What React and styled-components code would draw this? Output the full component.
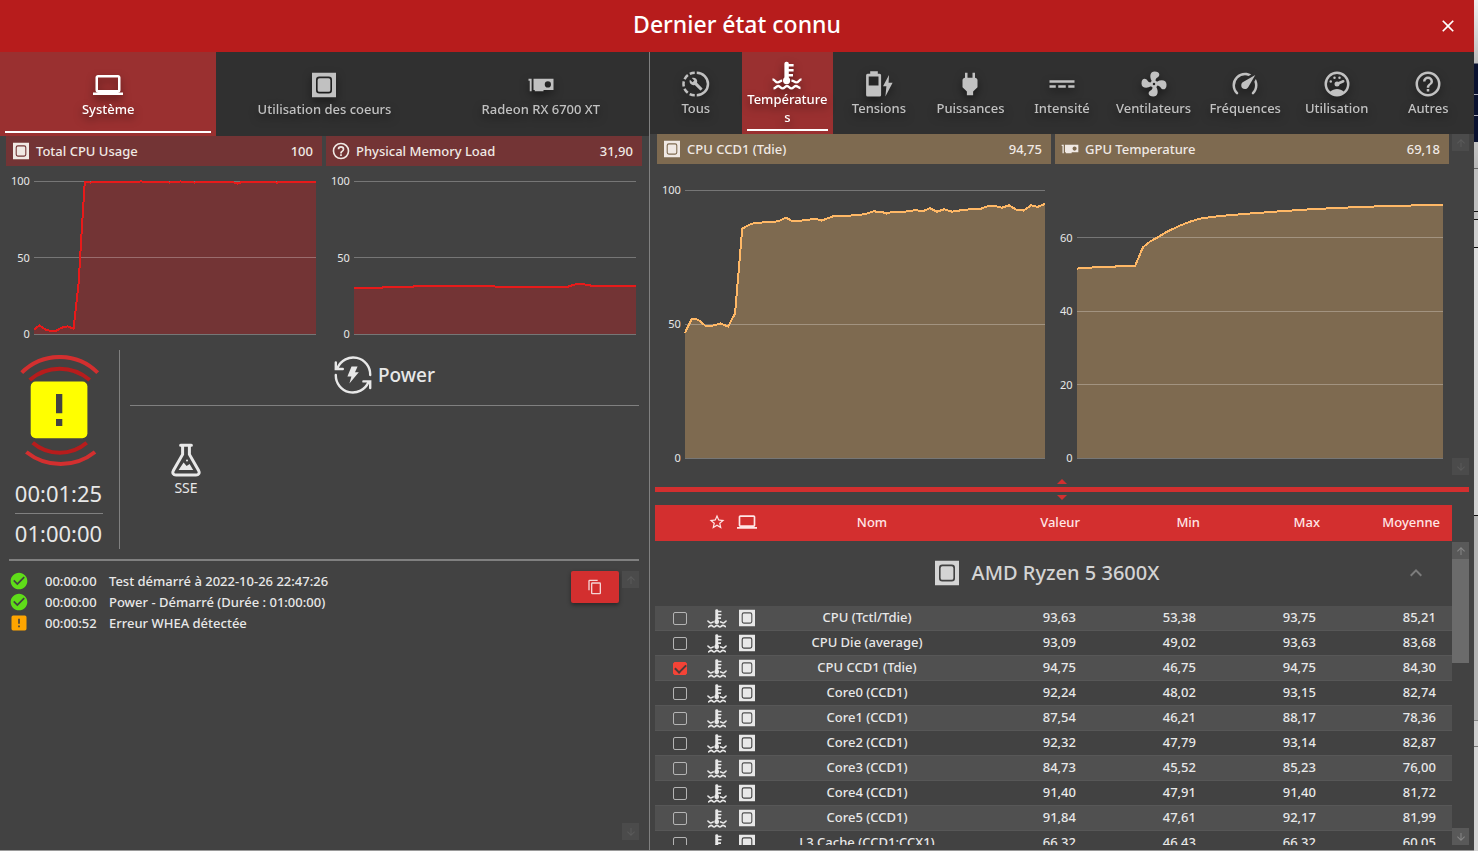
import React, { useState } from "react";
import styled, { createGlobalStyle, css } from "styled-components";

const GlobalStyle = createGlobalStyle`
    * {
        box-sizing: border-box;
    }
    body {
        margin: 0;
        background: #424242;
        color: #e8e8e8;
        font-family: "Noto Sans", "Open Sans", sans-serif;
        font-size: 13px;
        font-weight: 500;
        line-height: 18px;
    }
    button {
        font: inherit;
        color: inherit;
        border: 0;
        padding: 0;
        background: none;
        cursor: pointer;
    }
`;

/* ---------- icons ---------- */

const PATHS = {
    close: "M19,6.41L17.59,5L12,10.59L6.41,5L5,6.41L10.59,12L5,17.59L6.41,19L12,13.41L17.59,19L19,17.59L13.41,12L19,6.41Z",
    laptop: "M4,6H20V16H4M20,18A2,2 0 0,0 22,16V6C22,4.89 21.1,4 20,4H4C2.89,4 2,4.89 2,6V16A2,2 0 0,0 4,18H0V20H24V18H20Z",
    gpu: "M2,7V8.5H3V17H4.5V7M6,7V16H7V17H14V16H22V7M17.5,9A2.5,2.5 0 0,1 20,11.5A2.5,2.5 0 0,1 17.5,14A2.5,2.5 0 0,1 15,11.5A2.5,2.5 0 0,1 17.5,9Z",
    plug: "M16,7V3H14V7H10V3H8V7H8C7,7 6,8 6,9V14.5L9.5,18V21H14.5V18L18,14.5V9C18,8 17,7 16,7Z",
    current: "M2,9V11H22V9H2M2,13V15H7V13H2M9,13V15H15V13H9M17,13V15H22V13H17Z",
    fan: "M12,11A1,1 0 0,0 11,12A1,1 0 0,0 12,13A1,1 0 0,0 13,12A1,1 0 0,0 12,11M12.5,2C17,2 17.11,5.57 14.75,6.75C13.76,7.24 13.32,8.29 13.13,9.22C13.61,9.42 14.03,9.73 14.35,10.13C18.05,8.13 22.03,8.92 22.03,12.5C22.03,17 18.46,17.1 17.28,14.73C16.78,13.74 15.72,13.3 14.79,13.11C14.59,13.59 14.28,14 13.88,14.34C15.87,18.03 15.08,22 11.5,22C7,22 6.91,18.42 9.27,17.24C10.25,16.75 10.69,15.71 10.89,14.79C10.4,14.59 9.97,14.27 9.65,13.87C5.96,15.85 2,15.07 2,11.5C2,7 5.56,6.89 6.74,9.26C7.24,10.25 8.29,10.68 9.22,10.87C9.41,10.39 9.73,9.97 10.14,9.65C8.15,5.96 8.94,2 12.5,2Z",
    speed: "M12,16A3,3 0 0,1 9,13C9,11.88 9.61,10.9 10.5,10.39L20.21,4.77L14.68,14.35C14.18,15.33 13.17,16 12,16M12,3C13.81,3 15.5,3.5 16.97,4.32L14.87,5.53C14,5.19 13,5 12,5A8,8 0 0,0 4,13C4,15.21 4.89,17.21 6.34,18.65H6.35C6.74,19.04 6.74,19.67 6.35,20.06C5.96,20.45 5.32,20.45 4.93,20.07V20.07C3.12,18.26 2,15.76 2,13A10,10 0 0,1 12,3M22,13C22,15.76 20.88,18.26 19.07,20.07V20.07C18.68,20.45 18.05,20.45 17.66,20.06C17.27,19.67 17.27,19.04 17.66,18.65V18.65C19.11,17.2 20,15.21 20,13C20,12 19.81,11 19.46,10.1L20.67,8C21.5,9.5 22,11.18 22,13Z",
    help: "M11,18H13V16H11V18M12,2A10,10 0 0,0 2,12A10,10 0 0,0 12,22A10,10 0 0,0 22,12A10,10 0 0,0 12,2M12,20C7.59,20 4,16.41 4,12C4,7.59 7.59,4 12,4C16.41,4 20,7.59 20,12C20,16.41 16.41,20 12,20M12,6A4,4 0 0,0 8,10H10A2,2 0 0,1 12,8A2,2 0 0,1 14,10C14,12 11,11.75 11,15H13C13,12.75 16,12.5 16,10A4,4 0 0,0 12,6Z",
    star: "M12,15.39L8.24,17.66L9.23,13.38L5.91,10.5L10.29,10.13L12,6.09L13.71,10.13L18.09,10.5L14.77,13.38L15.76,17.66M22,9.24L14.81,8.63L12,2L9.19,8.63L2,9.24L7.45,13.97L5.82,21L12,17.27L18.18,21L16.54,13.97L22,9.24Z",
    copy: "M19,21H8V7H19M19,5H8A2,2 0 0,0 6,7V21A2,2 0 0,0 8,23H19A2,2 0 0,0 21,21V7A2,2 0 0,0 19,5M16,1H4A2,2 0 0,0 2,3V17H4V3H16V1Z",
    ok: "M12 2C6.5 2 2 6.5 2 12S6.5 22 12 22 22 17.5 22 12 17.5 2 12 2M10 17L5 12L6.41 10.59L10 14.17L17.59 6.58L19 8L10 17Z",
    alert: "M5,3H19A2,2 0 0,1 21,5V19A2,2 0 0,1 19,21H5A2,2 0 0,1 3,19V5A2,2 0 0,1 5,3M13,13V7H11V13H13M13,17V15H11V17H13Z",
    up: "M13,20H11V8L5.5,13.5L4.08,12.08L12,4.16L19.92,12.08L18.5,13.5L13,8V20Z",
    down: "M11,4H13V16L18.5,10.5L19.92,11.92L12,19.84L4.08,11.92L5.5,10.5L11,16V4Z",
    chevron: "M7.41,15.41L12,10.83L16.59,15.41L18,14L12,8L6,14L7.41,15.41Z",
};

// Icons that need more than a single filled path
const DRAWN = {
    cpu: (
        <path
            fillRule="evenodd"
            d="M2.4 2.2H21.6V21.8H2.4ZM8.2 5.2A2.6 2.6 0 0 0 5.6 7.8V16.2A2.6 2.6 0 0 0 8.2 18.8H15.8A2.6 2.6 0 0 0 18.4 16.2V7.8A2.6 2.6 0 0 0 15.8 5.2ZM8.4 6.6H15.6A1.5 1.5 0 0 1 17.1 8.1V15.9A1.5 1.5 0 0 1 15.6 17.4H8.4A1.5 1.5 0 0 1 6.9 15.9V8.1A1.5 1.5 0 0 1 8.4 6.6Z"
        />
    ),
    all: (
        <>
            <path d="M12.6 3A9 9 0 0 1 12.6 21" fill="none" stroke="currentColor" strokeWidth="2" />
            <path d="M11 21A9 9 0 0 1 11 3" fill="none" stroke="currentColor" strokeWidth="2" strokeDasharray="4.2 1.8" />
            <path
                transform="translate(6.4 6.4) scale(.47)"
                d="M22.7,19L13.6,9.9C14.5,7.6 14,4.9 12.1,3C10.1,1 7.1,0.6 4.7,1.7L9,6L6,9L1.6,4.7C0.4,7.1 0.9,10.1 2.9,12.1C4.8,14 7.5,14.5 9.8,13.6L18.9,22.7C19.3,23.1 19.9,23.1 20.3,22.7L22.6,20.4C23.1,20 23.1,19.3 22.7,19Z"
            />
        </>
    ),
    temp: (
        <g transform="scale(.8)">
            <rect x="12.4" y="1.8" width="4.4" height="18" rx="2" />
            <circle cx="14.6" cy="20.6" r="3.6" />
            <path
                d="M16 5.2H21.6M16 10.2H21.6M16 15.2H21M.5 19.4C3 19.4 3.2 22.4 5.6 22.4C7.8 22.4 7.8 20.8 10.2 20.6M29.5 19.4C27 19.4 26.8 22.4 24.4 22.4C22.2 22.4 22.2 20.8 19.4 20.6M1.5 28.4C4 28.4 4 26 6.2 26S8.4 28.4 10.6 28.4S12.8 26 15 26S17.2 28.4 19.4 28.4S21.6 26 23.8 26S26 28 28.5 28"
                fill="none"
                stroke="currentColor"
                strokeWidth="2.4"
            />
        </g>
    ),
    volt: (
        <g transform="scale(.8)">
            <path
                fillRule="evenodd"
                d="M6.2 2.3H13.8V4.8H15.6A1.5 1.5 0 0 1 17.1 6.3V25.9A1.5 1.5 0 0 1 15.6 27.4H3.6A1.5 1.5 0 0 1 2.1 25.9V6.3A1.5 1.5 0 0 1 3.6 4.8H6.2ZM4.7 7.6V16.4H14.5V7.6Z"
            />
            <path d="M25 6L19 17.2H22.4L21.4 27.4L28.6 13.8H24.6Z" />
        </g>
    ),
    gauge: (
        <>
            <path
                fillRule="evenodd"
                d="M12,2A10,10 0 0,0 2,12A10,10 0 0,0 12,22A10,10 0 0,0 22,12A10,10 0 0,0 12,2M12,4A8,8 0 0,1 20,12C20,14.4 19,16.5 17.3,18C15.9,16.7 14,16 12,16C10,16 8.2,16.7 6.7,18C5,16.5 4,14.4 4,12A8,8 0 0,1 12,4Z"
            />
            <circle cx="10" cy="7" r="1" />
            <circle cx="14" cy="7" r="1" />
            <circle cx="7" cy="10" r="1" />
            <circle cx="12" cy="12" r="2" />
            <path d="M12 12L17 9.8" stroke="currentColor" strokeWidth="2" strokeLinecap="round" />
        </>
    ),
};

const Svg = styled.svg`
    display: block;
    flex: none;
    fill: currentColor;
`;

const Icon = ({ name, size = 20, ...rest }) => (
    <Svg viewBox="0 0 24 24" width={size} height={size} aria-hidden="true" {...rest}>
        {DRAWN[name] || <path d={PATHS[name]} />}
    </Svg>
);

/* ---------- window ---------- */

const Screen = styled.div`
    display: flex;
    height: 100vh;
    overflow: hidden;
`;

const Window = styled.div`
    flex: 1;
    min-width: 0;
    display: flex;
    flex-direction: column;
    border-bottom: 1px solid #9a9a9a;
`;

// sliver of the desktop behind the window
const Desktop = styled.div`
    flex: 0 0 4px;
    background: linear-gradient(
        #f0f0f0 0, #bdbdbd 63px, #0a1230 64px, #0a1230 94px, #aab 94px, #aab 95px,
        #0a1230 95px, #0a1230 115px, #aab 115px, #aab 116px, #0a1230 116px, #0a1230 142px,
        #c4c4c4 142px, #b8b8b8 168px, #666 168px, #666 169px, #c0c0c0 169px, #c0c0c0 211px,
        #111 211px, #111 212px, #c0c0c0 212px, #c0c0c0 219px, #111 219px, #111 220px,
        #d0d0d0 220px, #d0d0d0 247px, #111 247px, #111 248px, #dedede 248px, #d2d2d2 515px,
        #111 515px, #111 516px, #b4b4b4 516px, #b4b4b4 720px, #888 720px, #888 721px,
        #d0d0d0 721px, #d0d0d0 746px, #777 746px, #777 747px, #d6d6d6 747px
    );
`;

const TitleBar = styled.header`
    display: grid;
    grid-template-columns: 1fr auto 1fr;
    align-items: center;
    height: 52px;
    flex: none;
    padding: 0 16px;
    background: #b71c1c;
    color: #fff;
`;

const Title = styled.h1`
    grid-column: 2;
    margin: 0;
    padding-bottom: 4px;
    font-size: 23px;
    font-weight: 500;
    line-height: 32px;
`;

const CloseButton = styled.button`
    justify-self: end;
`;

const Columns = styled.main`
    flex: 1;
    min-height: 0;
    display: grid;
    grid-template-columns: 650fr 824fr;
`;

const Panel = styled.section`
    display: flex;
    flex-direction: column;
    min-width: 0;
    min-height: 0;
    border-right: ${(p) => (p.$divided ? "1px solid #808080" : "0")};
`;

/* ---------- tabs ---------- */

const TabBar = styled.nav`
    display: flex;
    flex: none;
    height: ${(p) => p.$height}px;
    background: #303030;
`;

const TabButton = styled.button`
    position: relative;
    flex: 1 1 0;
    min-width: 0;
    padding: 0 5px;
    display: flex;
    flex-direction: column;
    align-items: center;
    justify-content: center;
    color: #c1c1c1;
    overflow-wrap: anywhere;

    svg,
    span {
        filter: drop-shadow(0 4px 4px rgba(0, 0, 0, 0.5));
    }

    ${(p) =>
        p.$active &&
        css`
            background: #9a3030;
            color: #fff;

            &::after {
                content: "";
                position: absolute;
                left: 5px;
                right: 5px;
                bottom: 3px;
                height: 2px;
                background: #fff;
            }
        `}
`;

const Tabs = ({ items, initial, height }) => {
    const [active, setActive] = useState(initial);
    return (
        <TabBar $height={height}>
            {items.map(([icon, label]) => (
                <TabButton key={label} $active={label === active} onClick={() => setActive(label)}>
                    <Icon name={icon} size={30} />
                    <span>{label}</span>
                </TabButton>
            ))}
        </TabBar>
    );
};

/* ---------- charts ---------- */

const ChartCard = styled.article`
    flex: 1 1 0;
    min-width: 0;
`;

const ChartHead = styled.div`
    display: flex;
    align-items: center;
    gap: 5px;
    height: 30px;
    padding: 0 9px 0 5px;
    background: ${(p) => p.$color};
    color: #f0e9e4;
`;

const ChartName = styled.span`
    flex: 1;
`;

const ChartBody = styled.div`
    display: flex;
    align-items: flex-end;
    height: ${(p) => p.$height}px;
    margin: ${(p) => p.$top}px 6px 0 5px;
`;

const Axis = styled.div`
    display: flex;
    flex-direction: column;
    justify-content: space-between;
    align-items: flex-end;
    padding-right: 4px;
    font-size: 11px;
    font-weight: 400;

    span {
        height: 0;
        line-height: 0;
    }
`;

const Plot = styled.svg`
    flex: 1;
    min-width: 0;
    height: 100%;
    overflow: visible;
`;

const THEMES = {
    red: { head: "#733435", fill: "#733435", line: "#e81a1a" },
    tan: { head: "#7e6a50", fill: "#7e6a50", line: "#ffb866" },
};

const Chart = ({ icon, name, value, theme, points, ticks, max, height, top }) => {
    const { head, fill, line } = THEMES[theme];
    const coords = points.map(([x, v]) => `${x},${max - v}`).join(" ");
    return (
        <ChartCard>
            <ChartHead $color={head}>
                <Icon name={icon} />
                <ChartName>{name}</ChartName>
                <span>{value}</span>
            </ChartHead>
            <ChartBody $height={height} $top={top}>
                <Axis style={{ height: `${(ticks[0] / max) * 100}%` }}>
                    {ticks.map((t) => (
                        <span key={t}>{t}</span>
                    ))}
                </Axis>
                <Plot viewBox={`0 0 100 ${max}`} preserveAspectRatio="none" shapeRendering="crispEdges">
                    <polygon points={`0,${max} ${coords} 100,${max}`} fill={fill} />
                    {ticks.map((t) => (
                        <line
                            key={t}
                            x1="0"
                            x2="100"
                            y1={max - t}
                            y2={max - t}
                            stroke="rgba(255,255,255,.28)"
                            vectorEffect="non-scaling-stroke"
                        />
                    ))}
                    <polyline points={coords} fill="none" stroke={line} strokeWidth="2" vectorEffect="non-scaling-stroke" />
                </Plot>
            </ChartBody>
        </ChartCard>
    );
};

const CPU_USAGE = [
    [0, 3], [2, 5.6], [4, 3], [6, 2], [8, 2.2], [9.6, 4], [11.8, 5], [14, 3.5], [15.8, 33], [17, 70], [18, 99.4],
    [20, 99], [24, 99.6], [30, 99.2], [38, 99.7], [48, 99], [52, 99.7], [57, 99], [62, 99.5], [70, 99.5],
    [72, 98.3], [74, 99.5], [84, 99.6], [86, 98.9], [88, 99.6], [100, 99.6],
];

const MEMORY = [
    [0, 30.2], [10, 30.2], [10.5, 31], [21, 31], [21.5, 31.6], [49, 31.6], [50, 31], [76, 31],
    [78.5, 32.5], [83, 32.3], [84, 31.6], [100, 31.6],
];

const CCD1 = [
    [0, 46.7], [1.9, 52], [3.6, 51.6], [5.9, 49.1], [8.2, 49.5], [9.8, 50.2], [12, 49], [13.9, 54], [15.9, 85.6],
    [18.4, 87.4], [22.2, 88], [25.9, 88.3], [28, 89.7], [29.9, 88.3], [33.3, 88.7], [36, 89.3], [37.9, 88.6],
    [41.6, 90.4], [47.2, 90.5], [50.1, 91], [52.3, 92], [54.6, 91.9], [55.9, 91.2], [57.8, 91.9], [62.5, 92],
    [64, 92.6], [65.9, 92], [68, 93.2], [70, 91.9], [72, 92.8], [74.2, 91.9], [77.8, 92.7], [81.7, 92.8],
    [84, 93.9], [86.4, 93.9], [88, 93.4], [90, 94.3], [91.9, 92.7], [94, 92.3], [96.1, 94.3], [97.9, 93.7], [100, 94.8],
];

const GPU_TEMP = [
    [0, 51.6], [2.2, 51.8], [6.7, 52], [13.8, 52.3], [15.9, 52.4], [18, 57.4], [20, 59], [21.8, 60],
    [24.7, 61.7], [28.1, 63.3], [30.9, 64.4], [34, 65.3], [39, 65.9], [47.3, 66.6], [55.5, 67.2], [64.6, 67.8],
    [75.5, 68.3], [83.7, 68.6], [92.3, 68.8], [100, 68.9],
];

const ChartRow = styled.div`
    flex: 1;
    min-width: 0;
    display: flex;
    gap: 4px;
`;

const SystemCharts = styled(ChartRow)`
    flex: none;
    padding: 0 7px 0 6px;
`;

/* ---------- scrollbars ---------- */

const Track = styled.div`
    flex: 0 0 17px;
    display: flex;
    flex-direction: column;
    justify-content: space-between;
`;

const TrackButton = styled.button`
    width: 17px;
    height: 17px;
    display: grid;
    place-items: center;
    background: ${(p) => (p.$live ? "#595959" : "#4b4b4b")};
    color: ${(p) => (p.$live ? "#868686" : "#5a5a5a")};
`;

const Thumb = styled.div`
    height: 104px;
    margin-bottom: auto;
    background: #6b6b6b;
`;

const Scrollbar = ({ live, className }) => (
    <Track className={className}>
        <TrackButton $live={live} aria-label="Défiler vers le haut">
            <Icon name="up" size={12} />
        </TrackButton>
        {live && <Thumb />}
        <TrackButton $live={live} aria-label="Défiler vers le bas">
            <Icon name="down" size={12} />
        </TrackButton>
    </Track>
);

/* ---------- test state ---------- */

const TestState = styled.div`
    display: flex;
    flex: none;
    margin-top: 16px;
`;

const Timer = styled.div`
    flex: 0 0 120px;
    display: flex;
    flex-direction: column;
    align-items: center;
    padding: 5px 2px 0 0;
    border-right: 1px solid #808080;
    font-size: 22px;
    font-weight: 400;
    line-height: 32px;

    svg {
        margin-bottom: 10px;
    }
`;

const TimerRule = styled.hr`
    width: 88px;
    margin: 4px 0 3px;
    border: 0;
    border-top: 1px solid #808080;
`;

const Alarm = () => (
    <svg width="80" height="112" viewBox="0 0 80 112" fill="none" strokeWidth="4" role="img" aria-label="Erreur">
        <path d="M2.7 17.7A53.8 53.8 0 0 1 78.7 17.7" stroke="#d32f2f" />
        <path d="M10.7 25A45.5 45.5 0 0 1 70.7 25" stroke="#b71c1c" />
        <rect x="11.7" y="26.5" width="56.7" height="56.7" rx="5" fill="#ff0" />
        <path d="M37 39H43.3V58.3H37ZM37 64H43.3V71H37Z" fill="#424242" />
        <path d="M13.7 87.8A41.5 41.5 0 0 0 67.7 87.8" stroke="#b71c1c" />
        <path d="M7.3 97A55 55 0 0 0 76 97" stroke="#d32f2f" />
    </svg>
);

const TestInfo = styled.div`
    flex: 1;
    padding: 0 10px;
`;

const TestName = styled.h2`
    display: flex;
    align-items: center;
    justify-content: center;
    gap: 6px;
    height: 56px;
    margin: 0;
    padding-bottom: 6px;
    border-bottom: 1px solid #808080;
    font-size: 19px;
    font-weight: 500;
`;

const PowerIcon = () => (
    <svg width="38" height="38" viewBox="0 0 38 38" fill="none" stroke="#e8e8e8" strokeWidth="2.4" strokeLinecap="round" aria-hidden="true">
        <path d="M3.6 11.8A17 17 0 0 1 36.2 19M1.8 19A17 17 0 0 0 34.4 26.2" />
        <path d="M1.8 6.5V13H8.8M29.4 25.4H36.2V32" />
        <path d="M17.5 10.5H23.6L21 16.2H24.8L15.4 27.6L17.4 20.6H13.4Z" fill="#e8e8e8" stroke="none" />
    </svg>
);

const Feature = styled.div`
    width: 112px;
    margin-top: 37px;
    display: flex;
    flex-direction: column;
    align-items: center;
    gap: 2px;
    font-size: 14px;
    font-weight: 400;
`;

const Flask = () => (
    <svg width="30" height="34" viewBox="0 0 30 34" fill="none" stroke="#e8e8e8" aria-hidden="true">
        <path
            d="M9.6 2.2H20.4M11.6 3V11.4L2.4 27.6C1 30.2 2.4 32 5 32H25C27.6 32 29 30.2 27.6 27.6L18.4 11.4V3"
            strokeWidth="3"
            strokeLinecap="round"
        />
        <path d="M7.6 27L12.6 19.6L15.6 23L18.6 21L22.2 27Z" fill="#e8e8e8" stroke="none" />
        <circle cx="16" cy="17.6" r="1" fill="#e8e8e8" stroke="none" />
    </svg>
);

/* ---------- log ---------- */

const LogArea = styled.div`
    flex: 1;
    min-height: 0;
    display: flex;
    margin: 10px 10px 10px 9px;
    padding-top: 10px;
    border-top: 2px solid #808080;
`;

const LogList = styled.ul`
    flex: 1;
    margin: 0;
    padding: 0;
    list-style: none;
`;

const LogLine = styled.li`
    display: grid;
    grid-template-columns: 36px 64px 1fr;
    align-items: start;
    height: 21px;
    line-height: 20px;

    svg {
        color: ${(p) => (p.$warn ? "#ffa500" : "#5fdc19")};
    }
`;

const CopyButton = styled.button`
    width: 48px;
    height: 32px;
    margin-right: 3px;
    display: grid;
    place-items: center;
    border-radius: 2px;
    background: #d32f2f;
    color: #f5d5d5;
    box-shadow: 0 2px 4px rgba(0, 0, 0, 0.4);
`;

const LOG = [
    ["00:00:00", "Test démarré à 2022-10-26 22:47:26"],
    ["00:00:00", "Power - Démarré (Durée : 01:00:00)"],
    ["00:00:52", "Erreur WHEA détectée", true],
];

/* ---------- sensors ---------- */

const SensorCharts = styled.div`
    display: flex;
    flex: none;
    gap: 3px;
    height: 341px;
    padding: 0 5px 0 7px;
`;

const Splitter = styled.div`
    display: flex;
    flex-direction: column;
    align-items: center;
    flex: none;
    height: 30px;
    gap: 3px;
    padding: 4px 5px 0;
`;

const Arrow = styled.span`
    border: 5px solid transparent;
    border-width: ${(p) => (p.$down ? "5px 5px 0" : "0 5px 5px")};
    border-color: #d32f2f transparent;
`;

const SplitterBar = styled.div`
    align-self: stretch;
    height: 5px;
    background: #d32f2f;
`;

const SensorArea = styled.div`
    flex: 1;
    min-height: 0;
    display: flex;
    padding: 0 5px;
    margin-bottom: 5px;
`;

const SensorClip = styled.div`
    flex: 1;
    min-width: 0;
    overflow: hidden;
`;

const SensorScrollbar = styled(Scrollbar)`
    margin-top: 37px;
`;

const Table = styled.table`
    width: 100%;
    table-layout: fixed;
    border-spacing: 0;

    th,
    td {
        padding: 0;
    }

    svg {
        margin: 0 auto;
    }
`;

const HeadRow = styled.tr`
    height: 36px;
    background: #d32f2f;
    color: #ffe6e6;

    th {
        padding-bottom: 2px;
        font-weight: 500;
    }
    th:nth-child(4) {
        padding-left: 10px;
    }
    th:nth-child(n + 5) {
        padding-right: 12px;
        text-align: right;
    }
`;

const Group = styled.div`
    display: flex;
    align-items: center;
    height: 65px;
    padding: 0 24px 2px 32px;
`;

const GroupName = styled.h2`
    flex: 1;
    display: flex;
    align-items: center;
    justify-content: center;
    gap: 10px;
    margin: 0;
    font-size: 20px;
    font-weight: 500;
    color: #d4d4d4;

    svg {
        margin: 0;
    }
`;

const GroupToggle = styled.button`
    color: #7c7c7c;
`;

const SensorRow = styled.tr`
    height: 25px;

    &:nth-child(even) {
        background: #505050;
    }
    td {
        padding-bottom: 2px;
        border-bottom: 1px solid #575757;
        text-align: center;
    }
    td:nth-child(-n + 3) {
        padding: 0;
    }
    td:first-child {
        padding-left: 3px;
    }
    td:nth-child(n + 5) {
        padding-right: 16px;
        text-align: right;
    }
`;

const Check = styled.input`
    appearance: none;
    display: grid;
    place-items: center;
    width: 14px;
    height: 13px;
    margin: 0 auto;
    border: 1px solid #b4b4b4;
    border-radius: 2px;

    &:checked {
        border-color: #f44336;
        background: #f44336;
    }
    &:checked::after {
        content: "";
        width: 9px;
        height: 5px;
        border: solid #4d3a39;
        border-width: 0 0 2px 2px;
        transform: translateY(-1px) rotate(-45deg);
    }
`;

const SENSORS = [
    ["CPU (Tctl/Tdie)", "93,63", "53,38", "93,75", "85,21"],
    ["CPU Die (average)", "93,09", "49,02", "93,63", "83,68"],
    ["CPU CCD1 (Tdie)", "94,75", "46,75", "94,75", "84,30"],
    ["Core0 (CCD1)", "92,24", "48,02", "93,15", "82,74"],
    ["Core1 (CCD1)", "87,54", "46,21", "88,17", "78,36"],
    ["Core2 (CCD1)", "92,32", "47,79", "93,14", "82,87"],
    ["Core3 (CCD1)", "84,73", "45,52", "85,23", "76,00"],
    ["Core4 (CCD1)", "91,40", "47,91", "91,40", "81,72"],
    ["Core5 (CCD1)", "91,84", "47,61", "92,17", "81,99"],
    ["L3 Cache (CCD1:CCX1)", "66,32", "46,43", "66,32", "60,05"],
];

const SYSTEM_TABS = [
    ["laptop", "Système"],
    ["cpu", "Utilisation des coeurs"],
    ["gpu", "Radeon RX 6700 XT"],
];

const SENSOR_TABS = [
    ["all", "Tous"],
    ["temp", "Températures"],
    ["volt", "Tensions"],
    ["plug", "Puissances"],
    ["current", "Intensité"],
    ["fan", "Ventilateurs"],
    ["speed", "Fréquences"],
    ["gauge", "Utilisation"],
    ["help", "Autres"],
];

const COLUMN_WIDTHS = [47, 30, 30, null, 120, 120, 120, 120];

const SensorTable = () => {
    const [selected, setSelected] = useState(["CPU CCD1 (Tdie)"]);
    const toggle = (name) =>
        setSelected((s) => (s.includes(name) ? s.filter((n) => n !== name) : [...s, name]));

    return (
        <Table>
            <colgroup>
                {COLUMN_WIDTHS.map((width, i) => (
                    <col key={i} width={width || undefined} />
                ))}
            </colgroup>
            <thead>
                <HeadRow>
                    <th />
                    <th><Icon name="star" size={18} /></th>
                    <th><Icon name="laptop" /></th>
                    <th>Nom</th>
                    <th>Valeur</th>
                    <th>Min</th>
                    <th>Max</th>
                    <th>Moyenne</th>
                </HeadRow>
            </thead>
            <tbody>
                <tr>
                    <td colSpan="8">
                        <Group>
                            <GroupName>
                                <Icon name="cpu" size={30} />
                                AMD Ryzen 5 3600X
                            </GroupName>
                            <GroupToggle aria-label="Replier">
                                <Icon name="chevron" size={24} />
                            </GroupToggle>
                        </Group>
                    </td>
                </tr>
                {SENSORS.map(([name, ...values]) => (
                    <SensorRow key={name}>
                        <td>
                            <Check
                                type="checkbox"
                                aria-label={name}
                                checked={selected.includes(name)}
                                onChange={() => toggle(name)}
                            />
                        </td>
                        <td><Icon name="temp" /></td>
                        <td><Icon name="cpu" /></td>
                        <td>{name}</td>
                        {values.map((v, i) => (
                            <td key={i}>{v}</td>
                        ))}
                    </SensorRow>
                ))}
            </tbody>
        </Table>
    );
};

export default () => {
    return (
        <Screen>
            <GlobalStyle />
            <Window>
                <TitleBar>
                    <Title>Dernier état connu</Title>
                    <CloseButton aria-label="Fermer">
                        <Icon name="close" />
                    </CloseButton>
                </TitleBar>
                <Columns>
                    <Panel $divided>
                        <Tabs items={SYSTEM_TABS} initial="Système" height={84} />
                        <SystemCharts>
                            <Chart icon="cpu" name="Total CPU Usage" value="100" theme="red" points={CPU_USAGE}
                                ticks={[100, 50, 0]} max={100} height={153} top={15} />
                            <Chart icon="help" name="Physical Memory Load" value="31,90" theme="red" points={MEMORY}
                                ticks={[100, 50, 0]} max={100} height={153} top={15} />
                        </SystemCharts>
                        <TestState>
                            <Timer>
                                <Alarm />
                                <span>00:01:25</span>
                                <TimerRule />
                                <span>01:00:00</span>
                            </Timer>
                            <TestInfo>
                                <TestName>
                                    <PowerIcon />
                                    Power
                                </TestName>
                                <Feature>
                                    <Flask />
                                    <span>SSE</span>
                                </Feature>
                            </TestInfo>
                        </TestState>
                        <LogArea>
                            <LogList>
                                {LOG.map(([time, text, warn]) => (
                                    <LogLine key={text} $warn={warn}>
                                        <Icon name={warn ? "alert" : "ok"} />
                                        <span>{time}</span>
                                        <span>{text}</span>
                                    </LogLine>
                                ))}
                            </LogList>
                            <CopyButton aria-label="Copier">
                                <Icon name="copy" size={16} />
                            </CopyButton>
                            <Scrollbar />
                        </LogArea>
                    </Panel>
                    <Panel>
                        <Tabs items={SENSOR_TABS} initial="Températures" height={82} />
                        <SensorCharts>
                            <ChartRow>
                                <Chart icon="cpu" name="CPU CCD1 (Tdie)" value="94,75" theme="tan" points={CCD1}
                                    ticks={[100, 50, 0]} max={100} height={268} top={26} />
                                <Chart icon="gpu" name="GPU Temperature" value="69,18" theme="tan" points={GPU_TEMP}
                                    ticks={[60, 40, 20, 0]} max={73} height={268} top={26} />
                            </ChartRow>
                            <Scrollbar />
                        </SensorCharts>
                        <Splitter>
                            <Arrow />
                            <SplitterBar />
                            <Arrow $down />
                        </Splitter>
                        <SensorArea>
                            <SensorClip>
                                <SensorTable />
                            </SensorClip>
                            <SensorScrollbar live />
                        </SensorArea>
                    </Panel>
                </Columns>
            </Window>
            <Desktop />
        </Screen>
    );
};
